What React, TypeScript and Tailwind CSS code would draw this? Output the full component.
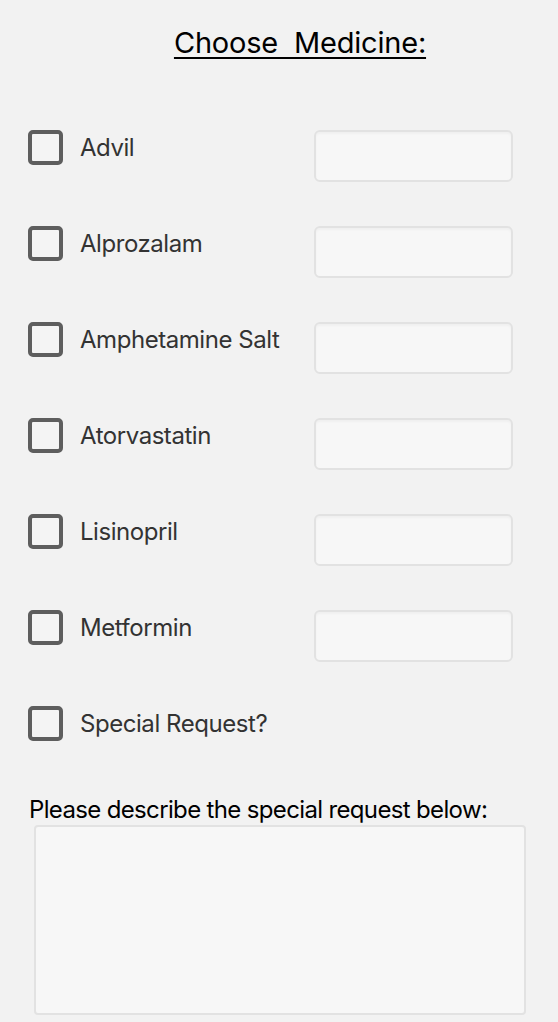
import React from 'react';

const medicines = ['Advil', 'Alprozalam', 'Amphetamine Salt', 'Atorvastatin', 'Lisinopril', 'Metformin'];

function Box() {
  return <div className="w-[35px] h-[35px] shrink-0 rounded-[5px] border-[4px] border-[#5e5e5e] bg-[#f4f4f4]" />;
}

export default function App() {
  return (
    <div className="min-h-[1022px] w-[558px] bg-[#f2f2f2] font-['Inter',sans-serif] overflow-hidden">
      <div className="flex justify-center pl-[42px] pt-[26px]">
        <h1 className="text-[29px] leading-[34px] text-black underline underline-offset-[4px] decoration-2 whitespace-pre tracking-[-0.2px]">
          Choose  Medicine:
        </h1>
      </div>

      <div className="flex flex-col gap-[44px] pl-[28px] pt-[70px]">
        {medicines.map((m) => (
          <div key={m} className="flex items-start h-[52px]">
            <Box />
            <span className="ml-[17px] w-[234px] text-[24px] leading-[35px] text-[#333] tracking-[-0.45px]">{m}</span>
            <div className="w-[199px] h-[52px] rounded-[6px] border-2 border-[#e2e2e2] bg-[#f7f7f7] shadow-[inset_0_2px_2px_rgba(0,0,0,0.03)]" />
          </div>
        ))}
        <div className="flex items-start h-[35px]">
          <Box />
          <span className="ml-[17px] text-[24px] leading-[35px] text-[#333] tracking-[-0.45px]">Special Request?</span>
        </div>
      </div>

      <div className="pl-[29px] pt-[54px]">
        <p className="text-[24px] leading-[30px] text-black tracking-[-0.65px]">Please describe the special request below:</p>
        <div className="ml-[5px] mt-[0px] w-[492px] h-[190px] rounded-[4px] border-2 border-[#e2e2e2] bg-[#f7f7f7]" />
      </div>
    </div>
  );
}
